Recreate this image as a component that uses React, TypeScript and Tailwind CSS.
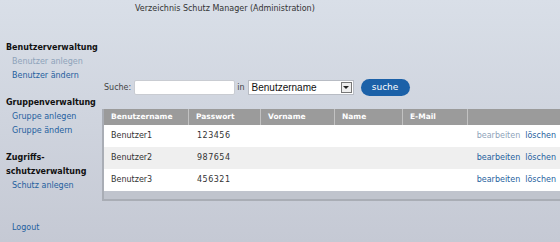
const users = [
  { name: "Benutzer1", pw: "123456" },
  { name: "Benutzer2", pw: "987654" },
  { name: "Benutzer3", pw: "456321" },
];

const cols = [
  { label: "Benutzername", w: "w-[85px]" },
  { label: "Passwort", w: "w-[72px]" },
  { label: "Vorname", w: "w-[74px]" },
  { label: "Name", w: "w-[68px]" },
  { label: "E-Mail", w: "w-[65px]" },
];

function NavLink({ children, muted }: { children: string; muted?: boolean }) {
  return (
    <div className={`pl-[6px] h-[14px] leading-[14px] ${muted ? "text-[#8ea3ba]" : "text-[#1f5f9e]"}`}>
      {children}
    </div>
  );
}

export default function App() {
  return (
    <div
      className="w-[560px] h-[242px] overflow-hidden bg-gradient-to-b from-[#d9dfe8] to-[#c5c9d4] text-[8px] text-[#333]"
      style={{ fontFamily: '"DejaVu Sans", Verdana, sans-serif' }}
    >
      <div className="h-[40px] pl-[135px] pt-[3px] leading-[12px]">
        Verzeichnis Schutz Manager (Administration)
      </div>
      <div className="flex">
        <div className="w-[102px] shrink-0 pl-[6px] pt-[1px]">
          <div className="h-[14px] leading-[14px] font-bold text-[#111]">Benutzerverwaltung</div>
          <NavLink muted>Benutzer anlegen</NavLink>
          <NavLink>Benutzer ändern</NavLink>
          <div className="mt-[13px] h-[14px] leading-[14px] font-bold text-[#111]">Gruppenverwaltung</div>
          <NavLink>Gruppe anlegen</NavLink>
          <NavLink>Gruppe ändern</NavLink>
          <div className="mt-[13px] leading-[14px] font-bold text-[#111]">
            Zugriffs-
            <br />
            schutzverwaltung
          </div>
          <NavLink>Schutz anlegen</NavLink>
          <div className="mt-[28px]">
            <NavLink>Logout</NavLink>
          </div>
        </div>

        <div className="flex-1">
          <div className="mt-[39px] h-[17px] flex items-center pl-[2px]">
            <span className="text-[#444]">Suche:</span>
            <input className="ml-[3px] w-[101px] h-[15px] bg-white border border-[#c9ccd2] rounded-[2px] outline-none" />
            <span className="ml-[2px] text-[#444]">in</span>
            <div
              className="ml-[3px] w-[106px] h-[15px] bg-white border border-[#b8bcc4] flex items-center justify-between pl-[3px] pr-[1px] text-[10px] text-[#111]"
              style={{ fontFamily: '"Liberation Sans", Arial, sans-serif' }}
            >
              <span>Benutzername</span>
              <span className="w-[11px] h-[11px] border border-[#777] bg-[#eee] flex items-center justify-center">
                <span className="w-0 h-0 border-l-[3px] border-r-[3px] border-t-[3px] border-l-transparent border-r-transparent border-t-[#222]" />
              </span>
            </div>
            <button className="ml-[7px] w-[49px] h-[17px] rounded-full bg-[#1b61a8] text-white text-[9px] leading-[17px]">
              suche
            </button>
          </div>

          <div className="mt-[13px] border-l-2 border-b-2 border-[#a9adb5] bg-[#c0c4cd]">
            <div className="flex h-[16px] bg-[#9b9b9b] text-white font-bold text-[7.5px]">
              {cols.map((c) => (
                <div key={c.label} className={`${c.w} pl-[7px] leading-[16px] border-r border-[#c2c2c2]`}>
                  {c.label}
                </div>
              ))}
              <div className="flex-1" />
            </div>
            {users.map((u, i) => (
              <div key={u.name} className={`flex h-[22px] items-center ${i === 1 ? "bg-[#efefef]" : "bg-white"}`}>
                <div className="w-[85px] pl-[7px]">{u.name}</div>
                <div className="w-[72px] pl-[8px] tracking-[0.5px]">{u.pw}</div>
                <div className="flex-1" />
                <div className={`mr-[3px] ${i === 0 ? "text-[#8ea3ba]" : "text-[#1f5f9e]"}`}>bearbeiten</div>
                <div className="ml-[2px] mr-[4px] text-[#1f5f9e]">löschen</div>
              </div>
            ))}
            <div className="h-[8px]" />
          </div>
        </div>
      </div>
    </div>
  );
}
